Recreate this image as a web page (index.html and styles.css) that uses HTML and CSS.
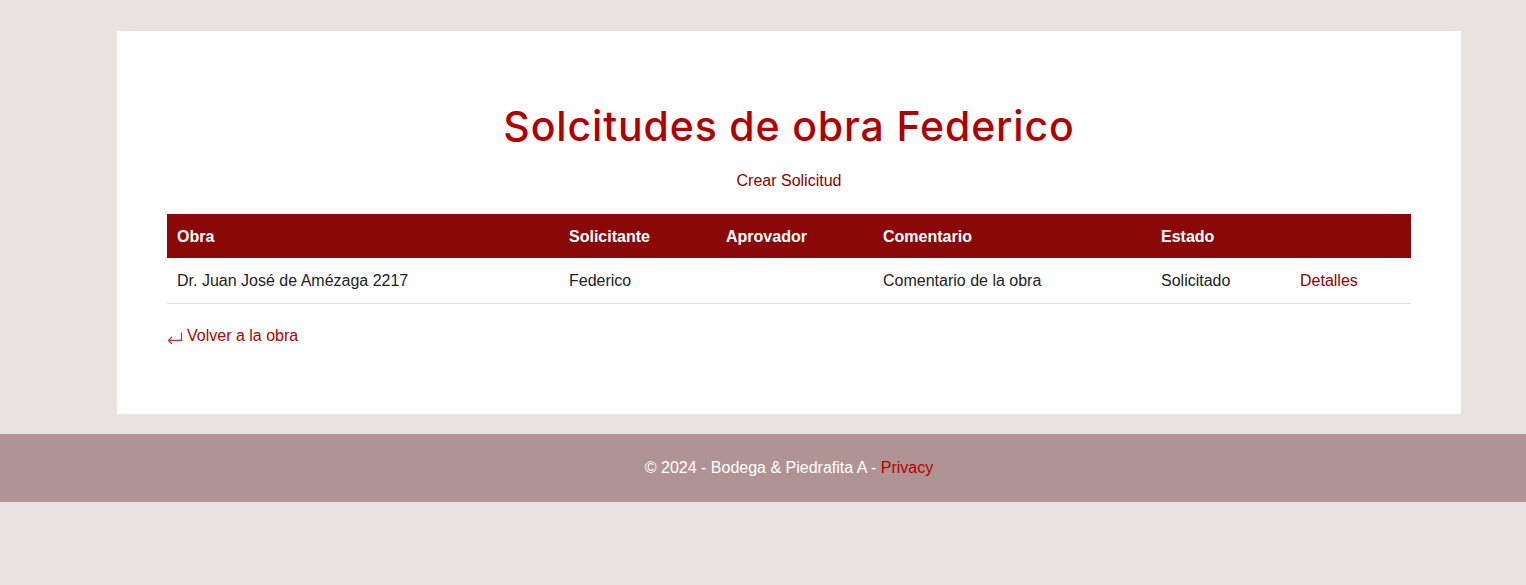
FILE: index.html
```html
<!DOCTYPE html>
<html lang="es">
<head>
<meta charset="utf-8">
<title>Solicitudes</title>
<link rel="stylesheet" href="styles.css">
</head>
<body>
<main class="page">
  <section class="card">
    <h1 class="title">Solcitudes de obra Federico</h1>
    <p class="create"><a href="#" class="link-dark">Crear Solicitud</a></p>
    <table class="table">
      <thead>
        <tr>
          <th class="c-obra">Obra</th>
          <th class="c-sol">Solicitante</th>
          <th class="c-apr">Aprovador</th>
          <th class="c-com">Comentario</th>
          <th class="c-est">Estado</th>
          <th class="c-act"></th>
        </tr>
      </thead>
      <tbody>
        <tr>
          <td>Dr. Juan José de Amézaga 2217</td>
          <td>Federico</td>
          <td></td>
          <td>Comentario de la obra</td>
          <td>Solicitado</td>
          <td><a href="#" class="link-dark">Detalles</a></td>
        </tr>
      </tbody>
    </table>
    <p class="back"><a href="#" class="link-red"><svg class="arrow" width="16" height="12" viewBox="0 0 16 12" fill="none" stroke="#b04040" stroke-width="1.3"><path d="M14.5 0.5V8.5H1.5"/><path d="M5 5L1.5 8.5L5 12"/></svg>Volver a la obra</a></p>
  </section>
</main>
<footer class="footer">
  <p class="footer-text">© 2024 - Bodega &amp; Piedrafita A - <a href="#" class="link-red">Privacy</a></p>
</footer>
</body>
</html>
```
FILE: styles.css
```css
* { box-sizing: border-box; }
html, body {
  margin: 0;
  padding: 0;
  background: #e8e2e2;
  font-family: "Liberation Sans", Arial, sans-serif;
  font-size: 16px;
  color: #222;
}
.page {
  padding: 31px 65px 0 117px;
}
.card {
  background: #fff;
  padding: 71px 50px 50px 50px;
  min-height: 383px;
}
.title {
  margin: 0;
  text-align: center;
  font-family: "Inter", "Open Sans", sans-serif;
  font-weight: 500;
  font-size: 41px;
  line-height: 48px;
  color: #b00000;
  letter-spacing: 0.85px;
}
.create {
  margin: 22px 0 0;
  text-align: center;
  line-height: 18px;
}
a { text-decoration: none; }
.link-dark { color: #8b0000; }
.link-red { color: #b30000; }
.table {
  margin-top: 24px;
  width: 100%;
  border-collapse: collapse;
  table-layout: fixed;
}
.table th {
  background: #8b0808;
  color: #fff;
  font-weight: bold;
  text-align: left;
  height: 44px;
  padding: 1px 10px 0;
}
.table td {
  height: 45px;
  padding: 2px 10px 0;
  border-bottom: 1px solid #dedede;
}
.c-obra { width: 392px; }
.c-sol { width: 157px; }
.c-apr { width: 157px; }
.c-com { width: 278px; }
.c-est { width: 139px; }
.c-act { width: auto; }
.back {
  margin: 23px 0 0;
  line-height: 18px;
}
.arrow {
  vertical-align: -3px;
  margin-right: 4px;
}
.footer {
  margin-top: 20px;
  background: #b09494;
  height: 68px;
  padding: 0 65px 0 117px;
  display: flex;
  align-items: center;
  justify-content: center;
}
.footer-text {
  margin: 0;
  color: #fff;
  line-height: 18px;
}
```
